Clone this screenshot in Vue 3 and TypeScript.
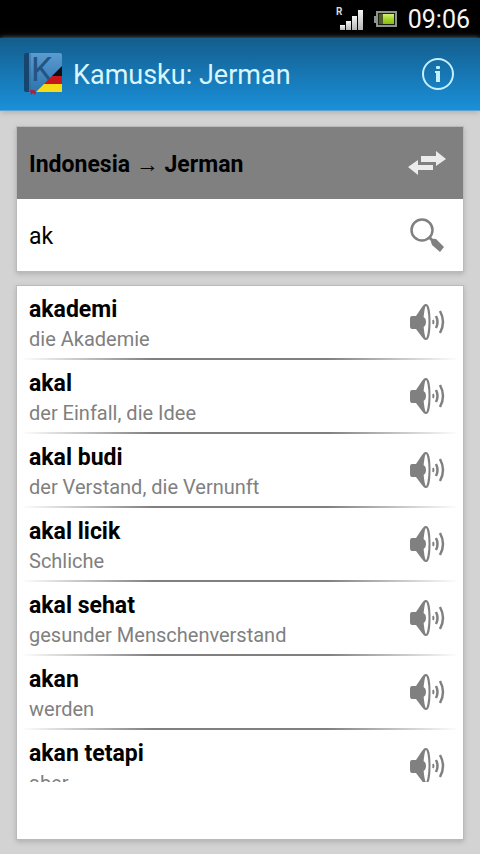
<script setup lang="ts">
import { ref } from 'vue'

interface Entry {
  word: string
  meaning: string
}

const query = ref('ak')

const languages = ref<[string, string]>(['Indonesia', 'Jerman'])

function swapLanguages(): void {
  languages.value = [languages.value[1], languages.value[0]]
}

const entries: Entry[] = [
  { word: 'akademi', meaning: 'die Akademie' },
  { word: 'akal', meaning: 'der Einfall, die Idee' },
  { word: 'akal budi', meaning: 'der Verstand, die Vernunft' },
  { word: 'akal licik', meaning: 'Schliche' },
  { word: 'akal sehat', meaning: 'gesunder Menschenverstand' },
  { word: 'akan', meaning: 'werden' },
  { word: 'akan tetapi', meaning: 'aber' },
]
</script>

<template>
  <div class="screen">
    <div class="status">
      <svg class="signal" viewBox="0 0 28 26" aria-hidden="true">
        <defs>
          <linearGradient id="bars" x1="0" y1="0" x2="0" y2="1">
            <stop offset="0" stop-color="#f4f4f4" />
            <stop offset="1" stop-color="#b4b4b4" />
          </linearGradient>
        </defs>
        <text x="0" y="8" class="roaming">R</text>
        <g fill="url(#bars)">
          <rect x="4" y="18" width="5" height="5" />
          <rect x="10" y="14" width="5" height="9" />
          <rect x="16" y="9" width="5" height="14" />
          <rect x="22" y="3" width="5" height="20" />
        </g>
      </svg>
      <svg class="battery" viewBox="0 0 24 18" aria-hidden="true">
        <defs>
          <linearGradient id="charge" x1="0" y1="0" x2="0" y2="1">
            <stop offset="0" stop-color="#d6ee7a" />
            <stop offset="0.5" stop-color="#a3d62a" />
            <stop offset="1" stop-color="#86bd12" />
          </linearGradient>
        </defs>
        <rect x="0" y="5" width="3" height="7" fill="#8d9298" />
        <rect x="3" y="1" width="19" height="14" fill="#1b1f14" stroke="#8f9490" stroke-width="2" />
        <rect x="5" y="3" width="4" height="10" fill="#4c5c24" />
        <rect x="9" y="3" width="11" height="10" fill="url(#charge)" />
      </svg>
      <time class="clock">09:06</time>
    </div>

    <header class="bar">
      <svg class="logo" viewBox="0 0 40 44" aria-hidden="true">
        <defs>
          <linearGradient id="cover" x1="0" y1="0" x2="0" y2="1">
            <stop offset="0" stop-color="#5b9bd0" />
            <stop offset="1" stop-color="#2d74ad" />
          </linearGradient>
          <clipPath id="corner">
            <path d="M39 14 L39 40 L13 40 Z" />
          </clipPath>
        </defs>
        <path d="M1 3 Q1 1 3 1 H7 V40 H3 Q1 40 1 38 Z" fill="#16456f" />
        <path d="M6 1 H37 Q39 1 39 3 V38 Q39 40 37 40 H6 Z" fill="url(#cover)" />
        <path d="M7 1 V40" stroke="#2f6d9e" stroke-width="1" />
        <text x="8" y="29" class="letter">K</text>
        <g clip-path="url(#corner)">
          <rect x="8" y="12" width="31" height="12" fill="#111116" />
          <rect x="8" y="24" width="31" height="8" fill="#c8161d" />
          <rect x="8" y="32" width="31" height="8" fill="#f5dc16" />
        </g>
        <path d="M7 38 L11 38 L13 40 L12 43 L10 41 L8 43 Z" fill="#a3243c" />
      </svg>
      <h1 class="title">Kamusku: Jerman</h1>
      <button class="info" type="button" aria-label="Info">
        <svg viewBox="0 0 34 34" aria-hidden="true">
          <circle cx="17" cy="17" r="15" fill="none" stroke="#c3f0ff" stroke-width="2" />
          <rect x="15" y="9" width="4" height="3" rx="1" fill="#c3f0ff" />
          <path d="M14 14 H19 V25 H15 V16 H14 Z" fill="#c3f0ff" />
        </svg>
      </button>
    </header>

    <main class="content">
      <section class="card">
        <div class="direction">
          <span class="pair">{{ languages[0] }} <span class="arrow">→</span> {{ languages[1] }}</span>
          <button class="action" type="button" aria-label="Tukar bahasa" @click="swapLanguages">
            <svg viewBox="0 0 38 36" aria-hidden="true">
              <path d="M13 10 H28 V5 L38 13 L28 20 V16 H13 Z" fill="#ececec" />
              <path d="M25 19 H10 V14 L0 21 L10 29 V24 H25 Z" fill="#ececec" />
            </svg>
          </button>
        </div>
        <div class="search">
          <input v-model="query" class="field" type="text" aria-label="Kata" />
          <button class="action" type="button" aria-label="Cari">
            <svg viewBox="0 0 38 36" aria-hidden="true">
              <circle cx="14" cy="12" r="10.5" fill="none" stroke="#808080" stroke-width="2.5" />
              <path d="M21 19 L25 23" stroke="#808080" stroke-width="3" />
              <path d="M23 24 Q24 20 28 21 L36 29 L32 34 L24 27 Z" fill="#808080" />
            </svg>
          </button>
        </div>
      </section>

      <section class="card results">
        <ul class="list">
          <li v-for="entry in entries" :key="entry.word" class="entry">
            <div class="texts">
              <span class="word">{{ entry.word }}</span>
              <span class="meaning">{{ entry.meaning }}</span>
            </div>
            <button class="action" type="button" :aria-label="'Dengarkan ' + entry.word">
              <svg viewBox="0 0 38 36" aria-hidden="true">
                <path d="M4 12 H8 L14 3 Q16 0 18 0 V36 Q16 36 14 33 L8 25 H4 Q2 25 2 22 V15 Q2 12 4 12 Z" fill="#808080" />
                <ellipse cx="18" cy="18" rx="3.5" ry="17" fill="#ffffff" stroke="#808080" stroke-width="2" />
                <path d="M14 13 Q18 13 18 18 Q18 23 14 23 Z" fill="#808080" />
                <path d="M25 16 Q26 18 25 20" fill="none" stroke="#808080" stroke-width="2" />
                <path d="M28 12 Q31 18 28 24" fill="none" stroke="#808080" stroke-width="2.5" />
                <path d="M32 7 Q38 18 32 29" fill="none" stroke="#808080" stroke-width="2.5" />
              </svg>
            </button>
          </li>
        </ul>
      </section>
    </main>
  </div>
</template>

<style>
body {
  margin: 0;
}
</style>

<style scoped>
.screen {
  display: flex;
  flex-direction: column;
  height: 100vh;
  overflow: hidden;
  background: #d3d3d3;
  color: #000000;
  font-family: Roboto, 'Liberation Sans', sans-serif;
}

button {
  display: flex;
  padding: 0;
  border: 0;
  background: none;
  cursor: pointer;
}

.status {
  display: flex;
  flex: none;
  align-items: center;
  justify-content: flex-end;
  gap: 10px;
  height: 38px;
  padding: 2px 10px 0;
  box-sizing: border-box;
  background: #000000;
}

.signal {
  width: 28px;
  height: 26px;
}

.roaming {
  fill: #d8d8d8;
  font-size: 10px;
  font-weight: 700;
}

.battery {
  width: 24px;
  height: 18px;
}

.clock {
  color: #f5f5f5;
  font-size: 25px;
  line-height: 36px;
}

.bar {
  display: flex;
  flex: none;
  align-items: center;
  gap: 10px;
  height: 73px;
  padding: 0 25px 0 23px;
  box-sizing: border-box;
  background: linear-gradient(#145d8c, #1a90d9);
  border-bottom: 1px solid #5ba3cf;
  box-shadow: 0 1px 6px #a8a8a8;
}

.logo {
  width: 40px;
  height: 44px;
}

.letter {
  fill: #235582;
  font-size: 34px;
}

.title {
  flex: 1;
  margin: 0;
  padding-top: 2px;
  color: #d9f6ff;
  font-size: 27px;
  font-weight: 400;
  line-height: 36px;
}

.info svg {
  width: 34px;
  height: 34px;
}

.content {
  display: flex;
  flex: 1;
  flex-direction: column;
  gap: 13px;
  min-height: 0;
  padding: 15px 16px 14px;
}

.card {
  border: 1px solid #bababa;
  background: #ffffff;
  box-shadow: 0 2px 5px #b0b0b0;
}

.direction,
.search {
  display: flex;
  align-items: center;
  justify-content: space-between;
  height: 72px;
  padding: 2px 17px 0 12px;
  box-sizing: border-box;
}

.direction {
  background: #808080;
}

.pair {
  font-size: 23px;
  font-weight: 700;
}

.arrow {
  font-weight: 400;
}

.action {
  flex: none;
}

.action svg {
  width: 38px;
  height: 36px;
}

.field {
  flex: 1;
  min-width: 0;
  padding: 0;
  border: 0;
  outline: 0;
  background: transparent;
  color: #000000;
  font-family: inherit;
  font-size: 23px;
}

.results {
  display: flex;
  flex: 1;
  flex-direction: column;
  min-height: 0;
  padding-bottom: 57px;
}

.list {
  flex: 1;
  min-height: 0;
  margin: 0;
  padding: 0;
  overflow: hidden;
  list-style: none;
}

.entry {
  display: flex;
  align-items: center;
  justify-content: space-between;
  height: 74px;
  padding: 0 17px 2px 12px;
  box-sizing: border-box;
  background: linear-gradient(90deg, #ffffff, #808080 30%, #808080 70%, #ffffff) center bottom / calc(100% - 8px) 2px no-repeat;
}

.texts {
  display: flex;
  flex-direction: column;
  padding-top: 4px;
}

.word {
  font-size: 23px;
  font-weight: 700;
  line-height: 30px;
}

.meaning {
  color: #808080;
  font-size: 20px;
  line-height: 28px;
}
</style>
